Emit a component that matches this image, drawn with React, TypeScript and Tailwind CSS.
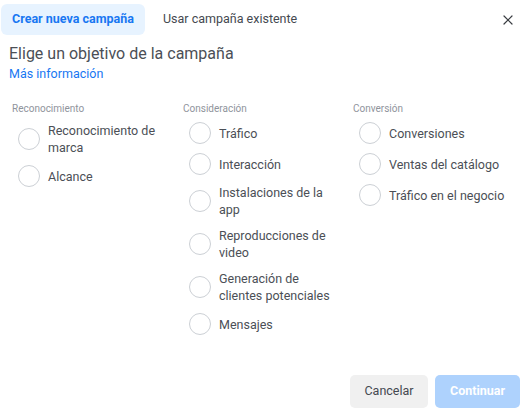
import { X } from "lucide-react";

const columns = [
  {
    title: "Reconocimiento",
    items: ["Reconocimiento de marca", "Alcance"],
  },
  {
    title: "Consideración",
    items: [
      "Tráfico",
      "Interacción",
      "Instalaciones de la app",
      "Reproducciones de video",
      "Generación de clientes potenciales",
      "Mensajes",
    ],
  },
  {
    title: "Conversión",
    items: ["Conversiones", "Ventas del catálogo", "Tráfico en el negocio"],
  },
];

export default function App() {
  return (
    <div
      className="w-[529px] h-[415px] bg-white flex flex-col text-[#4b4f56]"
      style={{ fontFamily: "Roboto, 'Liberation Sans', sans-serif" }}
    >
      <div className="flex items-center pt-[4px] pl-[1px] pr-[13px]">
        <button className="h-[31px] px-[11px] rounded-[6px] bg-[#e7f3ff] text-[#1877f2] text-[12.5px] font-bold">
          Crear nueva campaña
        </button>
        <button className="h-[31px] px-[11px] ml-[7px] text-[12.5px] text-[#444950]">
          Usar campaña existente
        </button>
        <X className="ml-auto text-[#3a3d42]" size={16} strokeWidth={1.8} />
      </div>

      <div className="px-[9px] pt-[9px]">
        <h1 className="text-[16px] leading-[20px] text-[#4b4f56]">Elige un objetivo de la campaña</h1>
        <a className="block text-[12.5px] leading-[16px] text-[#1877f2] mt-[2px]">Más información</a>
      </div>

      <div className="grid grid-cols-[171px_170px_1fr] pl-[12px] mt-[20px]">
        {columns.map((col) => (
          <div key={col.title} className="flex flex-col">
            <div className="text-[10px] leading-[14px] text-[#90949c]">{col.title}</div>
            <div className="flex flex-col gap-[9px] mt-[6px] pl-[6px]">
              {col.items.map((item) => (
                <label key={item} className="flex items-center gap-[8px]">
                  <span className="w-[22px] h-[22px] shrink-0 rounded-full border border-[#ccd0d5] bg-white" />
                  <span className="text-[12.5px] leading-[17px] text-[#4b4f56] max-w-[121px]">{item}</span>
                </label>
              ))}
            </div>
          </div>
        ))}
      </div>

      <div className="mt-auto mb-[7px] flex justify-end gap-[7px] pr-[9px]">
        <button className="w-[78px] h-[33px] rounded-[5px] bg-[#f0f0f0] text-[12.5px] text-[#444950]">
          Cancelar
        </button>
        <button className="w-[85px] h-[33px] rounded-[5px] bg-[#aed2fd] text-[12.5px] font-bold text-white">
          Continuar
        </button>
      </div>
    </div>
  );
}
